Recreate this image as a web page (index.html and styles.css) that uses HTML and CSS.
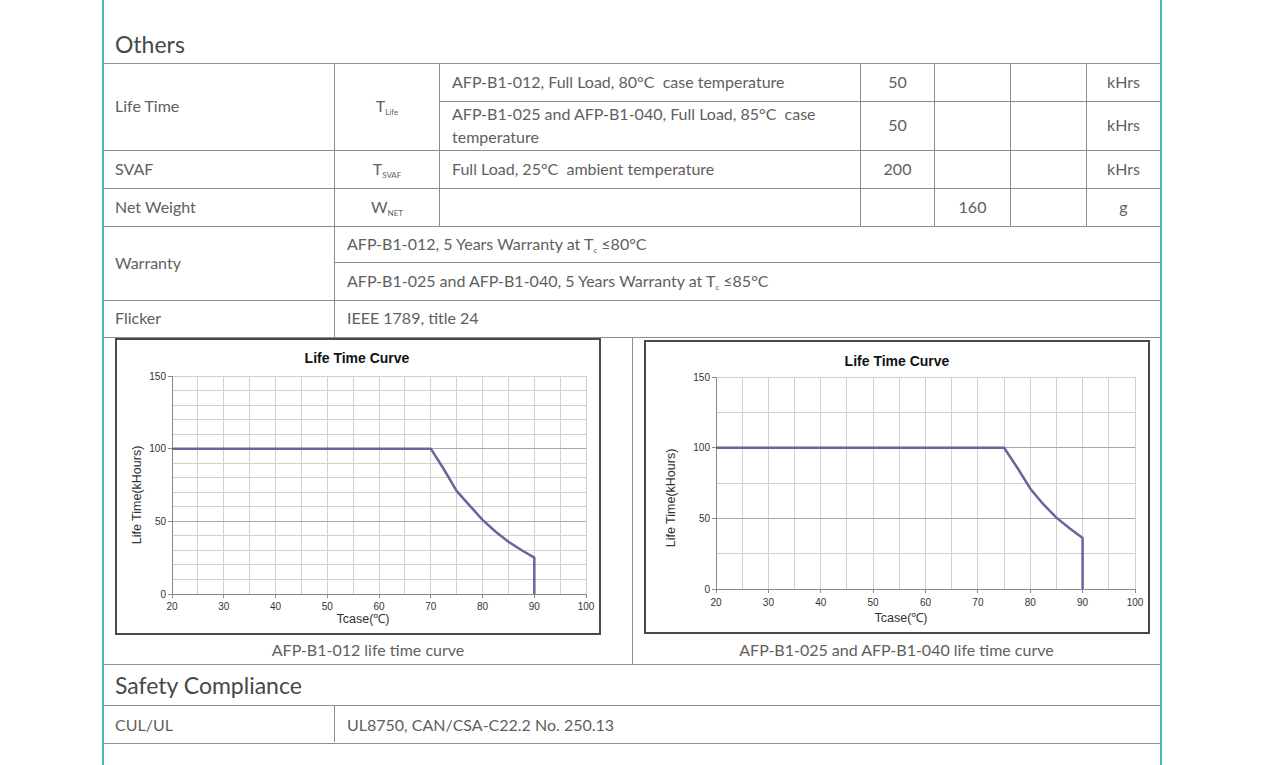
FILE: index.html
```html
<!DOCTYPE html>
<html>
<head>
<meta charset="utf-8">
<title>Others</title>
<link rel="stylesheet" href="styles.css">
</head>
<body>
<div class="page">
  <h2 class="section-title first">Others</h2>
  <table class="spec">
    <colgroup>
      <col class="c1"><col class="c2"><col class="c3"><col class="c4"><col class="c5"><col class="c6"><col class="c7">
    </colgroup>
    <tbody>
      <tr class="h38">
        <td rowspan="2" class="name">Life Time</td>
        <td rowspan="2" class="sym">T<sub>Life</sub></td>
        <td class="desc">AFP-B1-012, Full Load, 80°C&nbsp; case temperature</td>
        <td class="val">50</td><td class="val"></td><td class="val"></td><td class="val">kHrs</td>
      </tr>
      <tr class="h49">
        <td class="desc two">AFP-B1-025 and AFP-B1-040, Full Load, 85°C&nbsp; case temperature</td>
        <td class="val">50</td><td class="val"></td><td class="val"></td><td class="val">kHrs</td>
      </tr>
      <tr class="h38">
        <td class="name">SVAF</td>
        <td class="sym">T<sub>SVAF</sub></td>
        <td class="desc">Full Load, 25°C&nbsp; ambient temperature</td>
        <td class="val">200</td><td class="val"></td><td class="val"></td><td class="val">kHrs</td>
      </tr>
      <tr class="h38">
        <td class="name">Net Weight</td>
        <td class="sym">W<sub>NET</sub></td>
        <td class="desc"></td>
        <td class="val"></td><td class="val">160</td><td class="val"></td><td class="val">g</td>
      </tr>
      <tr class="h36">
        <td rowspan="2" class="name">Warranty</td>
        <td colspan="6" class="desc">AFP-B1-012, 5 Years Warranty at T<sub class="tc">c</sub> ≤80°C</td>
      </tr>
      <tr class="h38">
        <td colspan="6" class="desc">AFP-B1-025 and AFP-B1-040, 5 Years Warranty at T<sub class="tc">c</sub> ≤85°C</td>
      </tr>
      <tr class="h37">
        <td class="name">Flicker</td>
        <td colspan="6" class="desc">IEEE 1789, title 24</td>
      </tr>
    </tbody>
  </table>

  <div class="charts">
    <div class="chart-cell left">
      <svg class="chart c-one" width="482" height="293" viewBox="2 2 482 293" xmlns="http://www.w3.org/2000/svg">
        <rect x="2" y="2" width="482" height="293" fill="#fff"/>
        <path class="grid" d="M82.9 38V256M108.8 38V256M134.6 38V256M160.5 38V256M186.4 38V256M212.3 38V256M238.1 38V256M264 38V256M289.9 38V256M315.8 38V256M341.6 38V256M367.5 38V256M393.4 38V256M419.3 38V256M445.1 38V256M471 38V256M57 241.5H471M57 226.9H471M57 212.4H471M57 197.9H471M57 168.8H471M57 154.3H471M57 139.7H471M57 125.2H471M57 96.1H471M57 81.6H471M57 67.1H471M57 52.5H471M57 38H471"/>
        <path class="grid major" d="M57 183.3H471M57 110.7H471"/>
        <path class="axis" d="M57 38V256H471M53 38H57M53 110.7H57M53 183.3H57M53 256H57M57 256V260M108.8 256V260M160.5 256V260M212.3 256V260M264 256V260M315.8 256V260M367.5 256V260M419.3 256V260M471 256V260"/>
        <path class="curve" d="M57 110.7L315.8 110.7L328.7 131L341.6 152.8L354.5 167.3L367.5 181.9L380.4 193.5L393.4 203.7L406.3 212L419.3 219.7L419.3 256"/>
        <text class="ctitle" x="242" y="25">Life Time Curve</text>
        <g class="ytick">
          <text x="51" y="41.5">150</text><text x="51" y="114">100</text><text x="51" y="187">50</text><text x="51" y="259.5">0</text>
        </g>
        <g class="xtick">
          <text x="57" y="272">20</text><text x="108.8" y="272">30</text><text x="160.5" y="272">40</text><text x="212.3" y="272">50</text><text x="264" y="272">60</text><text x="315.8" y="272">70</text><text x="367.5" y="272">80</text><text x="419.3" y="272">90</text><text x="471" y="272">100</text>
        </g>
        <text class="xlabel" x="248" y="285">Tcase(℃)</text>
        <text class="ylabel" transform="translate(26 157) rotate(-90)">Life Time(kHours)</text>
      </svg>
      <p class="caption cap-one">AFP-B1-012 life time curve</p>
    </div>
    <div class="chart-cell right">
      <svg class="chart c-two" width="502" height="290" viewBox="2 2 502 290" xmlns="http://www.w3.org/2000/svg">
        <rect x="2" y="2" width="502" height="290" fill="#fff"/>
        <path class="grid" d="M98.2 37V249M124.4 37V249M150.6 37V249M176.8 37V249M202.9 37V249M229.1 37V249M255.3 37V249M281.5 37V249M307.7 37V249M333.9 37V249M360.1 37V249M386.3 37V249M412.4 37V249M438.6 37V249M464.8 37V249M491 37V249M72 213.7H491M72 143H491M72 72.3H491M72 37H491"/>
        <path class="grid major" d="M72 178.3H491M72 107.7H491"/>
        <path class="axis" d="M72 37V249H491M68 37H72M68 107.7H72M68 178.3H72M68 249H72M72 249V253M124.4 249V253M176.8 249V253M229.1 249V253M281.5 249V253M333.9 249V253M386.3 249V253M438.6 249V253M491 249V253"/>
        <path class="curve" d="M72 107.7L360.1 107.7L373.2 127.5L386.3 148.7L399.3 164.2L412.4 177.6L425.5 188.2L438.6 198.1L438.6 249"/>
        <text class="ctitle" x="253" y="26">Life Time Curve</text>
        <g class="ytick">
          <text x="66" y="40.5">150</text><text x="66" y="111">100</text><text x="66" y="182">50</text><text x="66" y="252.5">0</text>
        </g>
        <g class="xtick">
          <text x="72" y="266">20</text><text x="124.4" y="266">30</text><text x="176.8" y="266">40</text><text x="229.1" y="266">50</text><text x="281.5" y="266">60</text><text x="333.9" y="266">70</text><text x="386.3" y="266">80</text><text x="438.6" y="266">90</text><text x="491" y="266">100</text>
        </g>
        <text class="xlabel" x="257" y="282">Tcase(℃)</text>
        <text class="ylabel" transform="translate(31 158) rotate(-90)">Life Time(kHours)</text>
      </svg>
      <p class="caption cap-two">AFP-B1-025 and AFP-B1-040 life time curve</p>
    </div>
  </div>

  <h2 class="section-title safety">Safety Compliance</h2>
  <div class="row-two">
    <div class="rt-name">CUL/UL</div>
    <div class="rt-val">UL8750, CAN/CSA-C22.2 No. 250.13</div>
  </div>
</div>
</body>
</html>
```

FILE: styles.css
```css
* { box-sizing: border-box; }

html, body {
  margin: 0;
  padding: 0;
  background: #fff;
}

body {
  font-family: Lato, "Liberation Sans", Arial, sans-serif;
  color: #606060;
  font-size: 16px;
}

.page {
  width: 1060px;
  margin-left: 102px;
  min-height: 765px;
  border-left: 2px solid #4fb3bf;
  border-right: 2px solid #4fb3bf;
}

.section-title {
  margin: 0;
  font-weight: 400;
  font-size: 23px;
  line-height: 28px;
  color: #484848;
  padding-left: 11px;
}

.section-title.first {
  height: 63px;
  padding-top: 30px;
}

.spec {
  width: 1056px;
  table-layout: fixed;
  border-collapse: separate;
  border-spacing: 0;
  border-top: 1px solid #8c8c8c;
}

.c1 { width: 231px; }
.c2 { width: 105px; }
.c3 { width: 421px; }
.c4 { width: 74px; }
.c5 { width: 76px; }
.c6 { width: 76px; }
.c7 { width: 73px; }

.spec td {
  border-right: 1px solid #8c8c8c;
  border-bottom: 1px solid #8c8c8c;
  padding: 0 12px 2px;
  vertical-align: middle;
  line-height: 22px;
  font-size: 16px;
  color: #606060;
}

.spec td:last-child { border-right: 0; }

.spec td.name { padding-left: 11px; }

.h36 td { height: 36px; }
.h37 td { height: 37px; }
.h38 td { height: 38px; }
.h49 td { height: 49px; }

.spec td.two { line-height: 23px; }

.spec td.sym,
.spec td.val {
  text-align: center;
  padding: 0 0 2px;
}

.sym sub {
  font-size: 8px;
  vertical-align: -3px;
  line-height: 0;
}

sub.tc {
  font-size: 8px;
  vertical-align: -3px;
  line-height: 0;
}

.charts {
  display: flex;
  height: 327px;
  border-bottom: 1px solid #8c8c8c;
}

.chart-cell {
  display: flex;
  flex-direction: column;
  align-items: flex-start;
}

.chart-cell.left {
  width: 529px;
  border-right: 1px solid #8c8c8c;
  padding-left: 11px;
  padding-top: 0;
}

.chart-cell.right {
  flex: 1;
  padding-left: 11px;
  padding-top: 2px;
}

.chart {
  display: block;
  box-sizing: content-box;
  border: 2px solid #4a4a4a;
}

.chart .grid {
  fill: none;
  stroke: #d0d0d0;
  stroke-width: 1;
  shape-rendering: crispEdges;
}

.chart .grid.major { stroke: #a8a8a8; }

.chart .axis {
  fill: none;
  stroke: #8a8a8a;
  stroke-width: 1;
  shape-rendering: crispEdges;
}

.chart .curve {
  fill: none;
  stroke: #66669a;
  stroke-width: 2.5;
  stroke-linejoin: round;
}

.chart text {
  font-family: "Liberation Sans", Arial, sans-serif;
  fill: #333;
}

.chart .ctitle {
  font-size: 14px;
  font-weight: 700;
  text-anchor: middle;
  fill: #111;
}

.chart .ytick text {
  font-size: 10px;
  text-anchor: end;
}

.chart .xtick text {
  font-size: 10px;
  text-anchor: middle;
}

.chart .xlabel {
  font-size: 12.5px;
  text-anchor: middle;
}

.chart .ylabel {
  font-size: 12.5px;
  text-anchor: middle;
}

.caption {
  margin: 0;
  align-self: stretch;
  text-align: center;
  font-size: 16px;
  line-height: 22px;
  color: #606060;
}

.cap-one { margin-top: 4px; margin-left: -11px; }
.cap-two { margin-top: 5px; margin-left: -11px; }

.section-title.safety {
  height: 41px;
  display: flex;
  align-items: center;
  border-bottom: 1px solid #8c8c8c;
}

.row-two {
  display: flex;
  height: 38px;
  padding-bottom: 1px;
  border-bottom: 1px solid #8c8c8c;
  font-size: 16px;
  color: #606060;
}

.rt-name {
  width: 231px;
  padding-left: 11px;
  border-right: 1px solid #8c8c8c;
  display: flex;
  align-items: center;
}

.rt-val {
  flex: 1;
  padding-left: 12px;
  display: flex;
  align-items: center;
}
```
